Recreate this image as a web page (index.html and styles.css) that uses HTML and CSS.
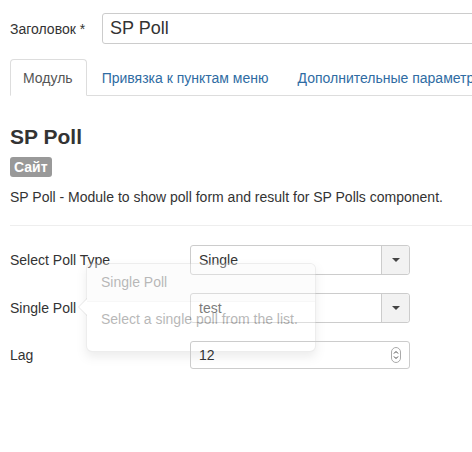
FILE: index.html
```html
<!DOCTYPE html>
<html lang="ru">
  <head>
    <meta charset="UTF-8" />
    <meta name="viewport" content="width=device-width, initial-scale=1.0" />
    <title>SP Poll</title>
    <link rel="stylesheet" href="styles.css">
  </head>
  <body>
    <div class="page">
      <div class="title-row">
        <label class="title-label">Заголовок *</label>
        <div class="title-input">SP Poll</div>
      </div>

      <ul class="tabs">
        <li class="active"><a>Модуль</a></li>
        <li><a>Привязка к пунктам меню</a></li>
        <li><a>Дополнительные параметры</a></li>
      </ul>

      <div class="tab-content">
        <h2>SP Poll</h2>
        <span class="badge">Сайт</span>
        <p class="desc">SP Poll - Module to show poll form and result for SP Polls component.</p>
        <hr>

        <div class="field">
          <label>Select Poll Type</label>
          <div class="select">
            <span class="value">Single</span>
            <span class="select-btn"><span class="caret"></span></span>
          </div>
        </div>

        <div class="field">
          <label>Single Poll</label>
          <div class="select">
            <span class="value">test</span>
            <span class="select-btn"><span class="caret"></span></span>
          </div>
          <!-- popover, still fading in -->
          <div class="popover">
            <div class="popover-arrow"></div>
            <div class="popover-title">Single Poll</div>
            <div class="popover-content">Select a single poll from the list.</div>
          </div>
        </div>

        <div class="field">
          <label>Lag</label>
          <div class="number">
            <span class="value">12</span>
            <svg class="stepper" width="10" height="16" viewBox="0 0 10 16">
              <rect x="0.5" y="0.5" width="9" height="15" rx="4.5" fill="#fff" stroke="#aaa"/>
              <path d="M3 6.5 L5 4.5 L7 6.5" fill="none" stroke="#444" stroke-width="1"/>
              <path d="M3 9.5 L5 11.5 L7 9.5" fill="none" stroke="#444" stroke-width="1"/>
            </svg>
          </div>
        </div>
      </div>
    </div>
  </body>
</html>
```

FILE: styles.css
```css
html, body {
  margin: 0;
  padding: 0;
  overflow: hidden;
}
body {
  font-family: "Liberation Sans", Arial, sans-serif;
  font-size: 14px;
  line-height: 18px;
  color: #333;
  background: #fff;
}
.page {
  padding: 13px 0 0 10px;
}
.title-row {
  display: flex;
  align-items: center;
}
.title-label {
  width: 92px;
  flex: none;
}
.title-input {
  flex: none;
  width: 420px;
  height: 29px;
  line-height: 29px;
  border: 1px solid #ccc;
  border-radius: 3px;
  padding: 0 7px;
  font-size: 18px;
  color: #333;
}

.tabs {
  list-style: none;
  margin: 15px 0 0 0;
  padding: 0;
  display: flex;
  border-bottom: 1px solid #ddd;
  white-space: nowrap;
}
.tabs li {
  margin-right: 2px;
  margin-bottom: -1px;
}
.tabs a {
  display: block;
  padding: 9px 13px 8px 12px;
  line-height: 18px;
  border: 1px solid transparent;
  border-radius: 4px 4px 0 0;
  color: #2f6ca3;
}
.tabs li.active a {
  color: #555;
  border-color: #ddd #ddd transparent;
  background: #fff;
}

.tab-content h2 {
  margin: 29px 0 0;
  font-size: 21px;
  line-height: 24px;
  font-weight: bold;
}
.badge {
  display: inline-block;
  margin-top: 8px;
  padding: 0 4px;
  height: 20px;
  line-height: 20px;
  font-size: 14px;
  font-weight: bold;
  color: #fff;
  background: #999;
  border-radius: 3px;
}
.desc {
  margin: 11px 0 0;
}
hr {
  margin: 19px 0 0;
  border: 0;
  border-top: 1px solid #eee;
}
.tab-content hr + .field {
  margin-top: 19px;
}

.field {
  position: relative;
  display: flex;
  align-items: center;
  margin-bottom: 18px;
}
.field label {
  width: 180px;
  flex: none;
}
.select, .number {
  width: 210px;
  height: 28px;
  border: 1px solid #ccc;
  border-radius: 3px;
  display: flex;
  align-items: center;
  padding-left: 8px;
}
.value {
  flex: 1;
}
.select-btn {
  width: 27px;
  height: 28px;
  border-left: 1px solid #ccc;
  background: #f2f2f2;
  border-radius: 0 3px 3px 0;
  display: flex;
  align-items: center;
  justify-content: center;
}
.caret {
  width: 0;
  height: 0;
  border-left: 4px solid transparent;
  border-right: 4px solid transparent;
  border-top: 4px solid #444;
}
.number {
  height: 26px;
}
.stepper {
  margin-right: 8px;
}

.popover {
  position: absolute;
  left: 76px;
  top: -30px;
  width: 228px;
  height: 87px;
  background: #fff;
  border: 1px solid rgba(0, 0, 0, 0.2);
  border-radius: 6px;
  box-shadow: 0 5px 10px rgba(0, 0, 0, 0.2);
  opacity: 0.35;
  font-size: 14px;
  line-height: 20px;
}
.popover-title {
  padding: 8px 14px 9px;
  background: #f7f7f7;
  border-bottom: 1px solid #ebebeb;
  border-radius: 5px 5px 0 0;
}
.popover-content {
  padding: 7px 14px;
}
.popover-arrow {
  position: absolute;
  left: -9px;
  top: 34px;
  width: 0;
  height: 0;
  border-top: 9px solid transparent;
  border-bottom: 9px solid transparent;
  border-right: 9px solid rgba(0, 0, 0, 0.25);
}
.popover-arrow::after {
  content: "";
  position: absolute;
  left: 1px;
  top: -8px;
  border-top: 8px solid transparent;
  border-bottom: 8px solid transparent;
  border-right: 8px solid #fff;
}
```
